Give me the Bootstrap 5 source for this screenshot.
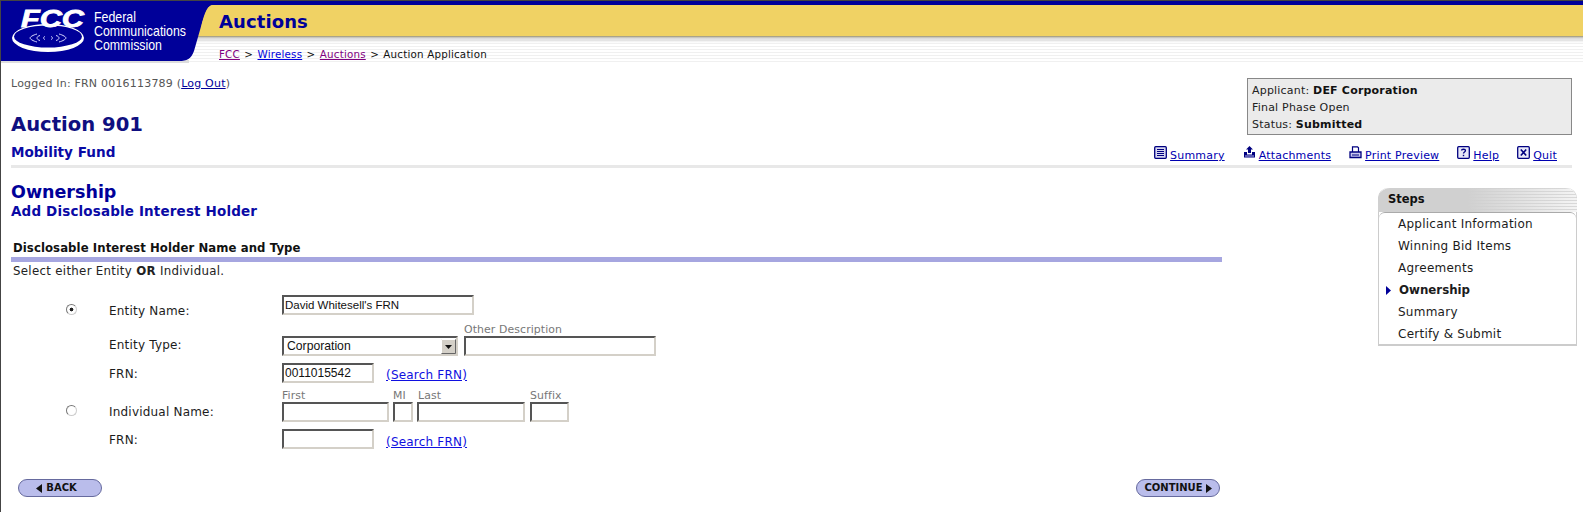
<!DOCTYPE html>
<html lang="en"><head><meta charset="utf-8"><title>Auction 901</title>
<link rel="stylesheet" href="https://cdn.jsdelivr.net/npm/bootstrap@5.3.0/dist/css/bootstrap.min.css">
<style>
html,body{height:512px;overflow:hidden}
body{background:#fff;font-family:"DejaVu Sans",Verdana,sans-serif;font-size:11px;line-height:17px;color:#111;border-left:1px solid #444;border-top:1px solid #444}
a{color:#0000b0}
.hdr{height:63px;background:linear-gradient(#000099 0 4px,#f0d264 4px 35px,#9a9270 35px,#d8d8d8 37px,transparent 42px),repeating-linear-gradient(#f0f0f0 0 1px,#fff 1px 3px)}
.brand{width:216px;height:63px;flex:none}
.hdr-title{height:35px;padding:7px 0 0 2px}
.hdr-title span{font-size:18px;font-weight:700;color:#000099;line-height:27px;letter-spacing:.1px}
.hdr .breadcrumb{--bs-breadcrumb-divider:'>';--bs-breadcrumb-divider-color:#111;--bs-breadcrumb-item-padding-x:4.4px;--bs-breadcrumb-margin-bottom:0;padding:10px 0 0 2px;font-size:10.3px;line-height:17px;color:#111;letter-spacing:.2px}
.hdr .breadcrumb-item.active{color:#111}
.crumb-v{color:#800080}.crumb-b{color:#0000dd}
.topband{margin-left:10px;margin-right:11px;height:104px;border-bottom:3px solid #e8e8e8}
.login{color:#555;padding-top:11px;height:36px;font-size:11px;letter-spacing:.2px}
.login a{color:#000099}
.title-a{font-size:19.6px;line-height:24px;font-weight:700;color:#0f0f80;margin-top:13px}
.title-b{font-size:13.6px;line-height:18px;font-weight:700;color:#0a0aa5;margin-top:6px}
.appbox{width:325px;height:57px;background:#ebebeb;border:1px solid #888;padding:3px 4px;margin-top:14px;font-size:11px;line-height:17px;color:#222;letter-spacing:.2px}
.appbox b{color:#111}
.toollinks{margin-top:13px;margin-right:15px;gap:18px;font-size:11px;line-height:15px}
.toollinks a{display:inline-flex;gap:3px;align-items:flex-start;letter-spacing:.2px}
.toollinks svg{flex:none;margin-top:-2px}
.mainbody{margin-left:10px}
.formcol{width:1211px;flex:none}
.h-own{font-size:17.5px;line-height:22px;font-weight:700;color:#000099;margin-top:13px}
.h-add{font-size:13.5px;line-height:17px;font-weight:700;color:#0a0aa5;letter-spacing:.15px}
.sect{margin-top:19px;height:23px;border-bottom:5px solid #a6a6e0;padding-left:2px;font-size:11.7px;line-height:19px;font-weight:700;color:#111;letter-spacing:.08px}
.sel-note{padding-left:2px;line-height:18px;font-size:11.8px;letter-spacing:.3px;color:#222;height:18px}
.frow{display:flex;align-items:flex-start}
.frow-1{margin-top:15px}.frow-2{margin-top:16px}.frow-3{margin-top:7px}.frow-4{margin-top:5px}.frow-5{margin-top:7px}
.c-lab{width:217px;flex:none;padding-left:44px;font-size:12px;letter-spacing:.2px;color:#1c1c1c;line-height:17px}
.lab-r{margin-left:-12px}
.lab-n{margin-left:54px}
.pt-a{padding-top:8px}.pt-b{padding-top:1px}.pt-c{padding-top:3px}.pt-d{padding-top:15px}
.fld{display:block;height:20px;border:2px solid;border-color:#555 #d4d0c8 #d4d0c8 #555;background:#fff;font-family:"Liberation Sans",Arial,sans-serif;font-size:11.5px;color:#111;padding:0 1px;border-radius:0;outline:0}
.w-ent{width:192px}.w-sel{width:176px;font-size:12.2px}.w-frn{width:92px;font-size:12px}.w-first{width:107px}.w-mi{width:20px}.w-last{width:108px}.w-suf{width:39px}
.radio{appearance:none;display:block;width:11px;height:11px;border-radius:50%;border:1px solid #777;border-right-color:#ccc;border-bottom-color:#ccc;background:#fff;margin:0 0 0 55px;flex:none}
.radio:checked{background:radial-gradient(circle,#222 0 1.6px,#fff 2.2px)}
.rad-a{margin-top:9px}.rad-b{margin-top:16px}
.slab{display:block;color:#777;font-size:10.9px;line-height:13px;height:13px;letter-spacing:.1px}
.slab-last{margin-left:1px}
.other{margin-left:6px;margin-top:-13px}
.suf{margin-left:1px}
.srch{font-size:12px;letter-spacing:.2px;color:#1010e0;margin-left:12px;padding-top:4px}
.srch-b{padding-top:5px}
select.fld{appearance:none;padding:0 0 0 3px;background:#fff url("data:image/svg+xml,%3Csvg xmlns='http://www.w3.org/2000/svg' width='15' height='15'%3E%3Crect width='15' height='15' fill='%23d4d0c8'/%3E%3Cpath d='M.5 14.500V.5h14' stroke='%23fff' fill='none'/%3E%3Cpath d='M.5 14.500h14V.5' stroke='%23666' fill='none'/%3E%3Cpath d='M4 6h7l-3.500 4z' fill='%23111'/%3E%3C/svg%3E") no-repeat right 0 center}
.btnrow{margin-top:28px;padding-left:7px;margin-right:2px}
.gobtn{--bs-btn-padding-y:0;--bs-btn-padding-x:0;--bs-btn-font-size:10px;--bs-btn-font-weight:700;--bs-btn-color:#111;--bs-btn-bg:#babdeb;--bs-btn-border-color:#666a9e;--bs-btn-hover-bg:#babdeb;--bs-btn-hover-color:#111;--bs-btn-hover-border-color:#666a9e;--bs-btn-line-height:16px;width:84px;height:18px;display:inline-flex;align-items:center;justify-content:center;gap:3px;font-family:"DejaVu Sans",sans-serif}
.gobtn-b{gap:4px;padding-right:7px}
.stepsbox{width:199px;margin-left:156px;margin-top:20px;flex:none;border:1px solid #ccc;border-top:0;border-bottom-width:2px;border-radius:10px 10px 0 0;background:#fff}
.stephead{height:24px;margin:0 -1px;border-radius:12px 12px 0 0;padding:1px 0 0 10px;font-weight:700;font-size:11.5px;line-height:20px;color:#111;background:linear-gradient(90deg,#d0d0d0 45%,rgba(208,208,208,0) 100%),repeating-linear-gradient(#d8d8d8 0 1px,#f4f4f4 1px 3px)}
.stepsbox .list-group{--bs-list-group-bg:transparent;--bs-list-group-item-padding-x:0;--bs-list-group-item-padding-y:0;--bs-list-group-border-width:0;--bs-list-group-color:#1c1c1c;border-top:1px solid #aaa;padding-top:1px}
.stepsbox .list-group-item{padding-left:19px;height:22px;line-height:21px;font-size:12px;letter-spacing:.25px;position:relative}
.stepsbox .list-group-item:last-child{height:20px}
.stepsbox .list-group-item.step-cur{font-weight:700;letter-spacing:0;font-size:11.8px;padding-left:20px}
.step-cur svg{position:absolute;left:7px;top:6px}
</style></head>
<body>
<header class="hdr d-flex">
  <svg class="brand" viewBox="0 0 216 63" role="img" aria-label="FCC Federal Communications Commission">
    <rect y="59" width="188" height="3" fill="#ddd"/>
    <path d="M0 0H216V4H212C206 4 205 12 201 22L193 50C190 58 186 60 178 60H0Z" fill="#000099"/>
    <path d="M216 4V35H199L201 22C204 10 207 4 213 4Z" fill="#f0d264"/>
    <path fill-rule="evenodd" d="M11 37a36 14 0 1 0 72 0a36 14 0 1 0 -72 0ZM13 35.500a34 11 0 1 0 68 0a34 11 0 1 0 -68 0Z" fill="#fff"/>
    <g fill="none" stroke="#d8d8ff" stroke-width="1">
      <path d="M36 33c-4 1-7 3-7 4s3 3 7 4M39 34.500c-2 .5-3 1.500-3 2.500s1 2 3 2.500M58 33c4 1 7 3 7 4s-3 3-7 4M55 34.500c2 .5 3 1.500 3 2.500s-1 2-3 2.500M44 35.500c-1 .3-1.500 1-1.500 1.500s.5 1.200 1.500 1.500M50 35.500c1 .3 1.500 1 1.500 1.500s-.5 1.200-1.500 1.500"/>
    </g>
    <text x="20" y="26" font-family="Liberation Sans,sans-serif" font-weight="700" font-style="italic" font-size="24" fill="#fff" textLength="63" lengthAdjust="spacingAndGlyphs" stroke="#fff" stroke-width=".8">FCC</text>
    <g font-family="Liberation Sans,sans-serif" font-size="14.500" fill="#fff">
      <text x="93" y="21" textLength="42" lengthAdjust="spacingAndGlyphs">Federal</text>
      <text x="93" y="35" textLength="92" lengthAdjust="spacingAndGlyphs">Communications</text>
      <text x="93" y="49" textLength="68" lengthAdjust="spacingAndGlyphs">Commission</text>
    </g>
  </svg>
  <div class="flex-grow-1">
    <div class="hdr-title"><span>Auctions</span></div>
    <nav aria-label="breadcrumb">
      <ol class="breadcrumb">
        <li class="breadcrumb-item"><a class="crumb-v" href="#">FCC</a></li>
        <li class="breadcrumb-item"><a class="crumb-b" href="#">Wireless</a></li>
        <li class="breadcrumb-item"><a class="crumb-v" href="#">Auctions</a></li>
        <li class="breadcrumb-item active" aria-current="page">Auction Application</li>
      </ol>
    </nav>
  </div>
</header>

<section class="topband d-flex justify-content-between">
  <div>
    <div class="login">Logged In: FRN 0016113789 (<a href="#">Log Out</a>)</div>
    <div class="title-a">Auction 901</div>
    <div class="title-b">Mobility Fund</div>
  </div>
  <div class="d-flex flex-column align-items-end">
    <div class="appbox">
      <div>Applicant: <b>DEF Corporation</b></div>
      <div>Final Phase Open</div>
      <div>Status: <b>Submitted</b></div>
    </div>
    <div class="toollinks d-flex">
      <a href="#"><svg width="13" height="13" viewBox="0 0 13 13"><rect x=".7" y=".7" width="11.600" height="11.600" rx="1" fill="#d8d8f0" stroke="#000080" stroke-width="1.300"/><path d="M3 3.500h7M3 5.500h7M3 7.500h7M3 9.500h7" stroke="#000080"/></svg>Summary</a>
      <a href="#"><svg width="13" height="13" viewBox="0 0 13 13"><path d="M6.500 0l3.500 3.500H8V7H5V3.500H3z" fill="#000080"/><path d="M1 6h3v2.500h5V6h3v5.500H1z" fill="#000080"/><path d="M2 10h9" stroke="#b8b8e8"/></svg>Attachments</a>
      <a href="#"><svg width="13" height="13" viewBox="0 0 13 13"><path d="M3.500 6V.8h5l1 1V6" fill="#fff" stroke="#000080" stroke-width="1.200"/><path d="M1 6h11v5.500H1z" fill="#c8c8f0" stroke="#000080" stroke-width="1.300"/><path d="M3 9h7" stroke="#000080"/></svg>Print Preview</a>
      <a href="#"><svg width="13" height="13" viewBox="0 0 13 13"><rect x=".7" y=".7" width="11.600" height="11.600" rx="1" fill="#e8e8f8" stroke="#000080" stroke-width="1.300"/><path d="M4.500 4.500C4.500 2.800 8.500 2.800 8.500 4.500C8.500 6 6.500 6 6.500 7.500" fill="none" stroke="#000080" stroke-width="1.300"/><path d="M5.800 8.800h1.400v1.400H5.800z" fill="#000080"/></svg>Help</a>
      <a href="#"><svg width="13" height="13" viewBox="0 0 13 13"><rect x=".7" y=".7" width="11.600" height="11.600" rx="1" fill="#e8e8f8" stroke="#000080" stroke-width="1.300"/><path d="M3.800 3.500l5.400 6M9.200 3.500l-5.400 6" stroke="#000080" stroke-width="1.600"/></svg>Quit</a>
    </div>
  </div>
</section>

<main class="mainbody d-flex align-items-start">
  <div class="formcol">
    <div class="h-own">Ownership</div>
    <div class="h-add">Add Disclosable Interest Holder</div>
    <div class="sect">Disclosable Interest Holder Name and Type</div>
    <div class="sel-note">Select either Entity <b>OR</b> Individual.</div>

    <div class="frow frow-1">
      <input class="radio rad-a" type="radio" name="k" checked aria-label="Entity">
      <label class="c-lab lab-r pt-a">Entity Name:</label>
      <input class="fld w-ent" value="David Whitesell's FRN" aria-label="Entity Name">
    </div>
    <div class="frow frow-2">
      <span class="c-lab lab-n pt-b">Entity Type:</span>
      <select class="fld w-sel" aria-label="Entity Type"><option>Corporation</option></select>
      <div class="other"><span class="slab">Other Description</span><input class="fld w-ent" aria-label="Other Description"></div>
    </div>
    <div class="frow frow-3">
      <span class="c-lab lab-n pt-c">FRN:</span>
      <input class="fld w-frn" value="0011015542" aria-label="FRN">
      <a class="srch" href="#">(Search FRN)</a>
    </div>
    <div class="frow frow-4">
      <input class="radio rad-b" type="radio" name="k" aria-label="Individual">
      <label class="c-lab lab-r pt-d">Individual Name:</label>
      <div class="me-1"><span class="slab">First</span><input class="fld w-first" aria-label="First"></div>
      <div class="me-1"><span class="slab">MI</span><input class="fld w-mi" aria-label="MI"></div>
      <div class="me-1"><span class="slab slab-last">Last</span><input class="fld w-last" aria-label="Last"></div>
      <div class="suf"><span class="slab">Suffix</span><input class="fld w-suf" aria-label="Suffix"></div>
    </div>
    <div class="frow frow-5">
      <span class="c-lab lab-n pt-c">FRN:</span>
      <input class="fld w-frn" aria-label="FRN">
      <a class="srch srch-b" href="#">(Search FRN)</a>
    </div>
    <div class="btnrow d-flex justify-content-between">
      <button class="btn gobtn gobtn-b rounded-pill" type="button"><svg width="6" height="9" viewBox="0 0 6 9"><path d="M6 0v9L0 4.500z" fill="#111"/></svg>BACK</button>
      <button class="btn gobtn rounded-pill" type="button">CONTINUE<svg width="6" height="9" viewBox="0 0 6 9"><path d="M0 0v9l6-4.500z" fill="#111"/></svg></button>
    </div>
  </div>
  <aside class="stepsbox">
    <div class="stephead">Steps</div>
    <div class="list-group">
      <div class="list-group-item">Applicant Information</div>
      <div class="list-group-item">Winning Bid Items</div>
      <div class="list-group-item">Agreements</div>
      <div class="list-group-item step-cur"><svg width="5" height="9" viewBox="0 0 5 9"><path d="M0 0v9l5-4.500z" fill="#000099"/></svg>Ownership</div>
      <div class="list-group-item">Summary</div>
      <div class="list-group-item">Certify &amp; Submit</div>
    </div>
  </aside>
</main>
<script src="https://cdn.jsdelivr.net/npm/bootstrap@5.3.0/dist/js/bootstrap.bundle.min.js"></script>
</body></html>
